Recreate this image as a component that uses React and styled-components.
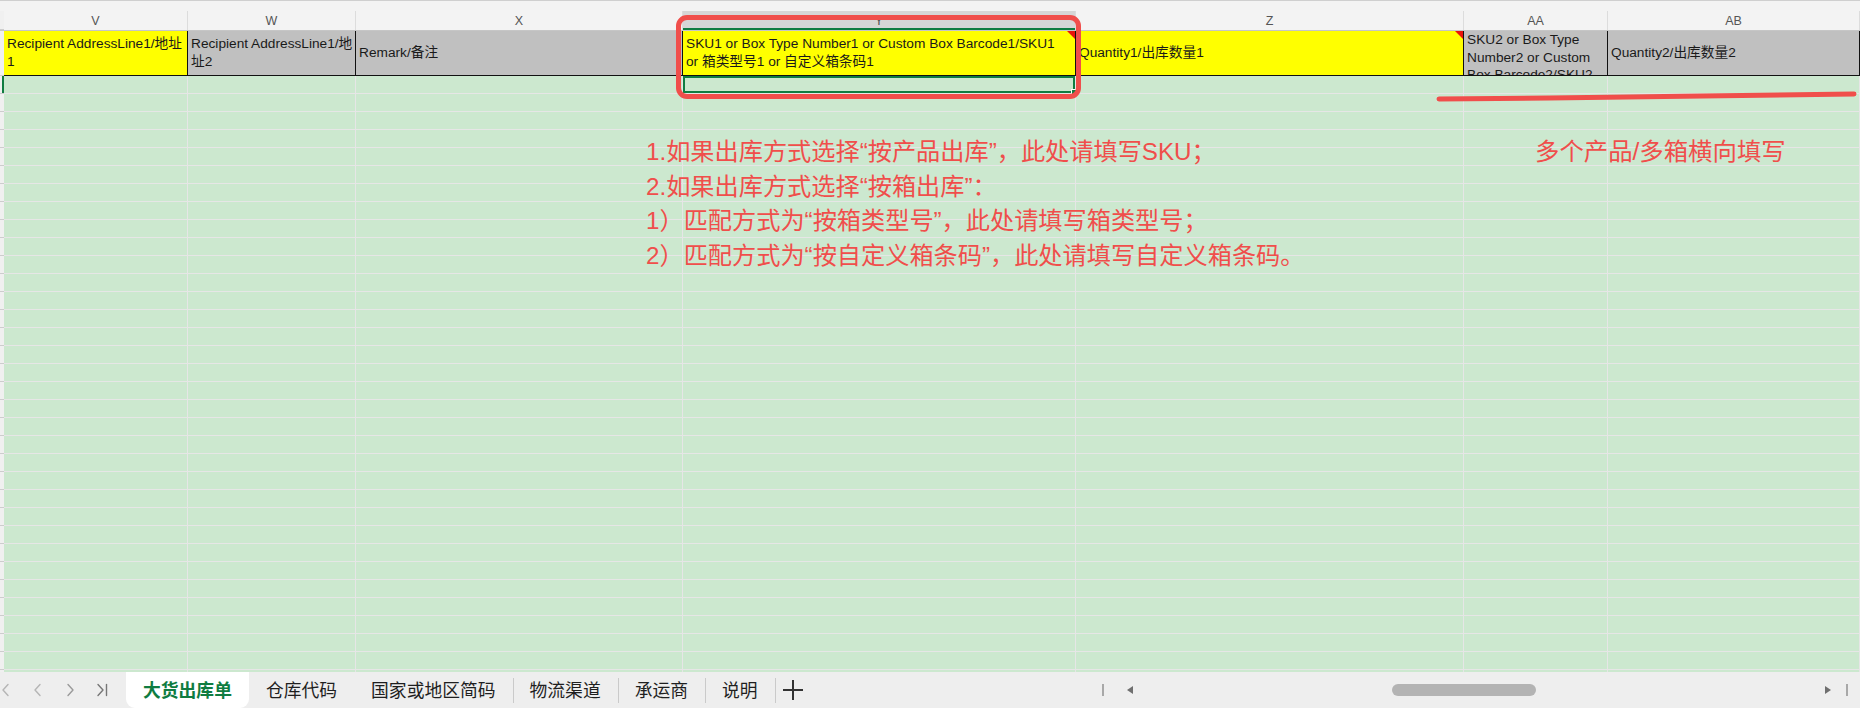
import React from 'react'
import styled, { createGlobalStyle, css } from 'styled-components'

const GlobalStyle = createGlobalStyle`
  html, body {
    margin: 0;
    padding: 0;
    overflow: hidden;
    background: #f3f3f3;
  }
  * { box-sizing: border-box; }
`

const COLS = '4px 184px 168px 327px 393px 388px 144px 1fr'
const RED = '#f04e4b'
const GREEN = '#107c41'
const LINE = '#e6e6e6'
const FONT = `"Liberation Sans", "Noto Sans CJK SC", sans-serif`

const letters = ['V', 'W', 'X', 'Y', 'Z', 'AA', 'AB']

const headers = [
  { lines: ['Recipient AddressLine1/地址', '1'], tone: 'yellow' },
  { lines: ['Recipient AddressLine1/地', '址2'], tone: 'grey' },
  { lines: ['Remark/备注'], tone: 'grey' },
  { lines: ['SKU1 or Box Type Number1 or Custom Box Barcode1/SKU1', 'or 箱类型号1 or 自定义箱条码1'], tone: 'yellow', note: true },
  { lines: ['Quantity1/出库数量1'], tone: 'yellow', note: true },
  { lines: ['SKU2 or Box Type', 'Number2 or Custom', 'Box Barcode2/SKU2'], tone: 'grey', top: true },
  { lines: ['Quantity2/出库数量2'], tone: 'grey' },
]

const tabs = ['大货出库单', '仓库代码', '国家或地区简码', '物流渠道', '承运商', '说明']

const notes = [
  '1.如果出库方式选择“按产品出库”，此处请填写SKU；',
  '2.如果出库方式选择“按箱出库”：',
  '1）匹配方式为“按箱类型号”，此处请填写箱类型号；',
  '2）匹配方式为“按自定义箱条码”，此处请填写自定义箱条码。',
]

const Page = styled.div`
  position: relative;
  width: 100%;
  height: 708px;
  display: flex;
  flex-direction: column;
  overflow: hidden;
  font-family: ${FONT};
  background: #f3f3f3;
`

const TopStrip = styled.div`
  height: 11px;
  flex: none;
  border-top: 1px solid #cfcfcf;
  background: #f3f3f3;
`

const GridRow = styled.div`
  display: grid;
  grid-template-columns: ${COLS};
  flex: none;
`

const ColLetters = styled(GridRow)`
  height: 20px;
  border-bottom: 1px solid #c6c6c6;
`

const Letter = styled.div`
  display: flex;
  align-items: center;
  justify-content: center;
  font-size: 12.5px;
  color: #555;
  border-right: 1px solid #dcdcdc;
  background: ${p => (p.$active ? '#d6d6d6' : '#f3f3f3')};
  box-shadow: ${p => (p.$active ? `inset 0 -2px 0 ${GREEN}` : 'none')};
  padding-top: 1px;
`

const Stub = styled.div`
  background: #f0f0f0;
  border-bottom: 1px solid #cdcdcd;
  box-shadow: ${p => (p.$active ? `inset -2px 0 0 ${GREEN}` : 'none')};
`

const HeaderRow = styled(GridRow)`
  height: 45px;
`

const HeadCell = styled.div`
  position: relative;
  display: flex;
  flex-direction: column;
  justify-content: ${p => (p.$top ? 'flex-start' : 'center')};
  padding: 0 3px;
  overflow: hidden;
  background: ${p => (p.$tone === 'yellow' ? '#ffff00' : '#c0c0c0')};
  border-right: 1px solid #111;
  border-bottom: 1px solid #111;
  font-size: 13.7px;
  line-height: 17.6px;
  color: #1a1a1a;
  white-space: nowrap;

  ${p => p.$note && css`
    &::after {
      content: '';
      position: absolute;
      top: 0;
      right: 0;
      border-style: solid;
      border-width: 0 8px 8px 0;
      border-color: transparent #e8140c transparent transparent;
    }
  `}
`

const Body = styled.div`
  flex: 1;
  overflow: hidden;
`

const BodyRow = styled(GridRow)`
  height: 18px;
`

const Cell = styled.div`
  background: #cce8cf;
  border-right: 1px solid ${LINE};
  border-bottom: 1px solid ${LINE};
  ${p => p.$selected && css`
    position: relative;
    box-shadow: inset 0 0 0 2px ${GREEN};
    &::after {
      content: '';
      position: absolute;
      right: -3px;
      bottom: -3px;
      width: 5px;
      height: 5px;
      background: ${GREEN};
      border: 1px solid #fff;
    }
  `}
`

const TabBar = styled.div`
  height: 36px;
  flex: none;
  display: flex;
  align-items: stretch;
  background: #eeeeee;
`

const NavGroup = styled.div`
  width: 126px;
  flex: none;
  display: flex;
  align-items: center;
  gap: 20px;
`

const ArrowBtn = styled.div`
  width: 12px;
  height: 12px;
  display: flex;
  align-items: center;
  justify-content: center;
  color: ${p => p.$tint};
`

const Tab = styled.div`
  display: flex;
  align-items: center;
  padding: 0 17px;
  font-size: 17.8px;
  position: relative;
  color: ${p => (p.$active ? GREEN : '#1f1f1f')};
  font-weight: ${p => (p.$active ? 700 : 400)};
  background: ${p => (p.$active ? '#ffffff' : 'transparent')};
  border-radius: ${p => (p.$active ? '0 0 9px 9px' : '0')};
  padding-bottom: 2px;

  & + &::before {
    content: '';
    position: absolute;
    left: 0;
    top: 6px;
    bottom: 5px;
    width: 1px;
    background: ${p => (p.$afterActive || p.$active ? 'transparent' : '#cacaca')};
  }
`

const AddBtn = styled.div`
  position: relative;
  display: flex;
  align-items: center;
  padding: 0 7px;
  color: #333;

  &::before {
    content: '';
    position: absolute;
    left: 0;
    top: 6px;
    bottom: 5px;
    width: 1px;
    background: #cacaca;
  }
`

const ScrollArea = styled.div`
  flex: 1;
  display: flex;
  align-items: center;
  padding-left: 291px;
`

const Divider = styled.div`
  width: 2px;
  height: 12px;
  background: #a8a8a8;
  margin-right: 22px;
`

const Track = styled.div`
  flex: 1;
  display: flex;
  align-items: center;
  padding-left: 258px;
  padding-right: 14px;
`

const Thumb = styled.div`
  width: 144px;
  height: 12px;
  border-radius: 6px;
  background: #b3b3b3;
  margin-right: auto;
`

const EdgeMark = styled.div`
  width: 2px;
  height: 12px;
  background: #a8a8a8;
  margin-left: 14px;
  margin-right: -2px;
`

const Callout = styled.div`
  position: absolute;
  left: 676px;
  top: 15px;
  width: 405px;
  height: 84px;
  border: 5px solid ${RED};
  border-radius: 11px;
  pointer-events: none;
`

const Stroke = styled.svg`
  position: absolute;
  left: 1430px;
  top: 88px;
  pointer-events: none;
`

const NoteBlock = styled.div`
  position: absolute;
  left: 646px;
  top: 135px;
  font-size: 24.2px;
  line-height: 34.7px;
  color: ${RED};
  white-space: nowrap;
`

const SideNote = styled.div`
  position: absolute;
  left: 1535px;
  top: 137px;
  font-size: 24.4px;
  line-height: 30px;
  color: ${RED};
  white-space: nowrap;
`

const Chevron = ({ dir, bar }) => (
  <svg width="12" height="14" viewBox="0 0 12 14" fill="none" stroke="currentColor" strokeWidth="1.4" strokeLinecap="round" strokeLinejoin="round">
    {dir === 'left' ? <path d="M8 1.5 3 7l5 5.5" /> : <path d={bar ? 'M2 1.5 7 7l-5 5.5' : 'M4 1.5 9 7l-5 5.5'} />}
    {bar && <path d="M10.5 1.5v11" />}
  </svg>
)

const Tri = ({ dir }) => (
  <svg width="8" height="10" viewBox="0 0 8 10">
    <path d={dir === 'left' ? 'M7 1v8L1 5z' : 'M1 1v8l6-4z'} fill="#6f6f6f" />
  </svg>
)

export default function App() {
  const rows = Array.from({ length: 34 }, (_, i) => i)
  return (
    <>
      <GlobalStyle />
      <Page>
        <TopStrip />
        <ColLetters>
          <Stub />
          {letters.map(l => (
            <Letter key={l} $active={l === 'Y'}>{l}</Letter>
          ))}
        </ColLetters>
        <HeaderRow>
          <Stub />
          {headers.map((h, i) => (
            <HeadCell key={i} $tone={h.tone} $note={h.note} $top={h.top}>
              {h.lines.map(line => <span key={line}>{line}</span>)}
            </HeadCell>
          ))}
        </HeaderRow>
        <Body>
          {rows.map(r => (
            <BodyRow key={r}>
              <Stub $active={r === 0} />
              {letters.map(l => (
                <Cell key={l} $selected={r === 0 && l === 'Y'} />
              ))}
            </BodyRow>
          ))}
        </Body>
        <TabBar>
          <NavGroup>
            <ArrowBtn $tint="#b5b5b5"><Chevron dir="left" /></ArrowBtn>
            <ArrowBtn $tint="#b5b5b5"><Chevron dir="left" /></ArrowBtn>
            <ArrowBtn $tint="#9a9a9a"><Chevron dir="right" /></ArrowBtn>
            <ArrowBtn $tint="#777"><Chevron dir="right" bar /></ArrowBtn>
          </NavGroup>
          {tabs.map((t, i) => (
            <Tab key={t} $active={i === 0} $afterActive={i === 1}>{t}</Tab>
          ))}
          <AddBtn>
            <svg width="22" height="22" viewBox="0 0 22 22" stroke="#333" strokeWidth="2">
              <path d="M11 1v20M1 11h20" />
            </svg>
          </AddBtn>
          <ScrollArea>
            <Divider />
            <Tri dir="left" />
            <Track>
              <Thumb />
              <Tri dir="right" />
              <EdgeMark />
            </Track>
          </ScrollArea>
        </TabBar>

        <Callout />
        <Stroke width="430" height="20" viewBox="0 0 430 20">
          <path d="M9 11 C 150 10, 300 8, 424 6" stroke={RED} strokeWidth="5" strokeLinecap="round" fill="none" />
        </Stroke>
        <NoteBlock>
          {notes.map(n => <div key={n}>{n}</div>)}
        </NoteBlock>
        <SideNote>多个产品/多箱横向填写</SideNote>
      </Page>
    </>
  )
}
